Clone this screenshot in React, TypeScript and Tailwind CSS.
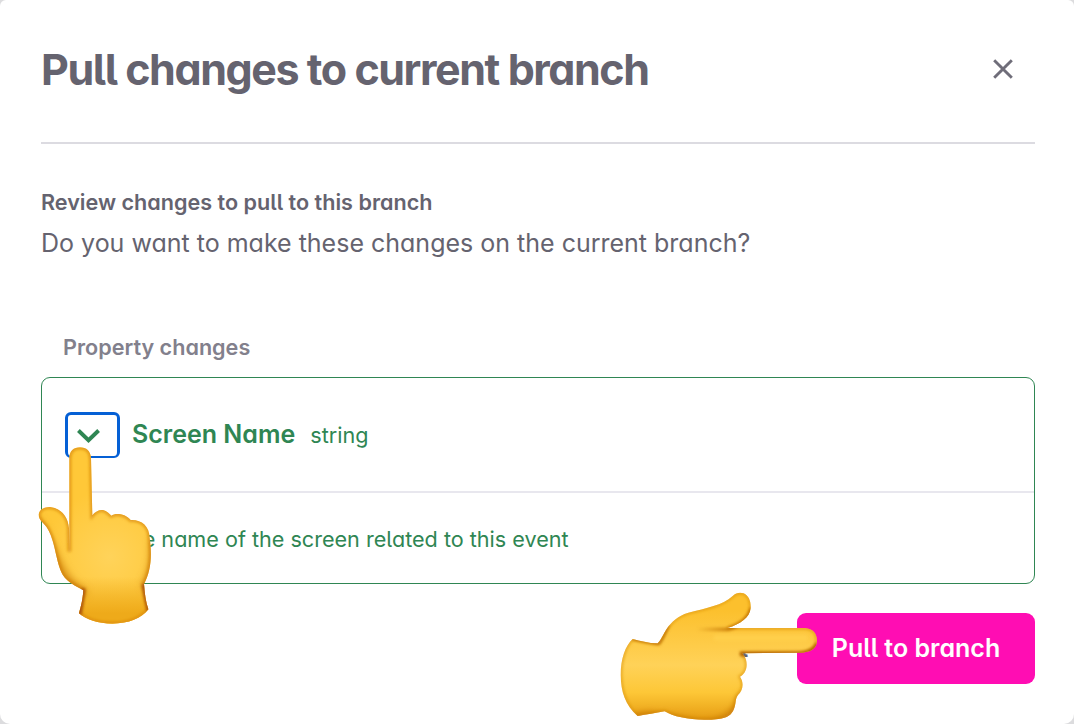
import React from "react";

const inter = "font-['Inter',sans-serif] [font-feature-settings:'cv11','cv05']";

function HandUp() {
  return (
    <svg className="absolute left-[36px] top-[444px] h-[184px] w-[120px]" viewBox="108 132 360 552">
      <defs>
        <path
          id="up"
          d="M208 455V174C208 154 221 142 240 142S272 154 273 174L277 346C285 336 295 330 305 330C317 330 325 338 334 347C345 339 375 340 392 360C422 358 449 376 449 415C457 470 452 515 432 552C434 580 437 605 445 628C425 655 385 671 337 671C295 671 258 658 237 640C244 615 248 600 250 571C225 555 205 550 188 524C168 490 166 420 140 382C130 367 116 362 116 343C118 328 132 321 150 321C184 325 204 350 207 385Z"
        />
        <clipPath id="upClip"><use href="#up" /></clipPath>
        <filter id="b14" x="-40%" y="-40%" width="180%" height="180%"><feGaussianBlur stdDeviation="12" /></filter>
        <filter id="b5" x="-40%" y="-40%" width="180%" height="180%"><feGaussianBlur stdDeviation="5" /></filter>
        <radialGradient id="upFill" gradientUnits="userSpaceOnUse" cx="330" cy="470" r="200">
          <stop offset="0" stopColor="#ffd35a" />
          <stop offset="1" stopColor="#ffc838" />
        </radialGradient>
        <linearGradient id="upWrist" gradientUnits="userSpaceOnUse" x1="0" y1="530" x2="0" y2="640">
          <stop offset="0" stopColor="#eeaa1a" stopOpacity="0" />
          <stop offset="1" stopColor="#eeaa1a" />
        </linearGradient>
      </defs>
      <use href="#up" fill="url(#upFill)" />
      <g clipPath="url(#upClip)">
        <path d="M200 520H480V700H200Z" fill="url(#upWrist)" />
        <use href="#up" fill="none" stroke="#d98a0e" strokeOpacity=".8" strokeWidth="11" filter="url(#b5)" />
        <path d="M105 360C160 420 165 540 255 580M462 420C466 480 455 530 434 560" fill="none" stroke="#c26f08" strokeWidth="16" filter="url(#b14)" />
        <path d="M250 565L238 645M431 552L448 635" fill="none" stroke="#a94f08" strokeWidth="13" filter="url(#b5)" />
        <path d="M209 370V458" fill="none" stroke="#c57908" strokeWidth="9" filter="url(#b5)" />
      </g>
    </svg>
  );
}

function HandRight() {
  return (
    <svg className="absolute left-[618px] top-[590px] h-[132px] w-[202px]" viewBox="54 30 606 396">
      <defs>
        <path
          id="rt"
          d="M98 177C120 182 145 190 173 190C193 170 200 118 265 98C320 84 367 76 398 48C408 38 420 37 431 40C447 47 453 65 452 84C449 113 422 132 382 144H615C638 146 651 160 651 182C650 206 631 217 600 218L427 220C434 229 440 238 440 254C440 273 430 284 420 290C432 307 430 330 414 345C405 356 409 370 402 386C395 405 382 413 355 417C290 425 225 413 194 394C165 399 140 404 113 408C75 375 63 335 62 285C62 237 76 197 98 177Z"
        />
        <clipPath id="rtClip"><use href="#rt" /></clipPath>
        <filter id="c14" x="-40%" y="-40%" width="180%" height="180%"><feGaussianBlur stdDeviation="10" /></filter>
        <filter id="c5" filterUnits="userSpaceOnUse" x="0" y="0" width="720" height="480"><feGaussianBlur stdDeviation="5" /></filter>
        <linearGradient id="rtFill" gradientUnits="userSpaceOnUse" x1="0" y1="90" x2="0" y2="420">
          <stop offset="0" stopColor="#fcc02d" />
          <stop offset=".5" stopColor="#ffd258" />
          <stop offset=".75" stopColor="#fdc737" />
          <stop offset="1" stopColor="#e69c12" />
        </linearGradient>
        <linearGradient id="rtCrease" gradientUnits="userSpaceOnUse" x1="290" y1="0" x2="400" y2="0">
          <stop offset="0" stopColor="#c07005" stopOpacity="0" />
          <stop offset="1" stopColor="#c07005" />
        </linearGradient>
      </defs>
      <use href="#rt" fill="url(#rtFill)" />
      <g clipPath="url(#rtClip)">
        <use href="#rt" fill="none" stroke="#dc930f" strokeOpacity=".7" strokeWidth="9" filter="url(#c5)" />
        <path d="M98 414C160 389 220 422 300 429C380 429 410 395 424 345" fill="none" stroke="#c87808" strokeWidth="16" filter="url(#c14)" />
        <path d="M98 176L176 191C188 178 192 160 205 136" fill="none" stroke="#bd6f07" strokeWidth="8" filter="url(#c5)" />
        <path d="M420 222H600Q642 218 654 190" fill="none" stroke="#b06004" strokeWidth="14" filter="url(#c5)" />
        <path d="M290 148H382C420 138 448 115 454 84" fill="none" stroke="url(#rtCrease)" strokeWidth="10" filter="url(#c5)" />
        <path d="M350 174H615" stroke="#ffcf4c" strokeWidth="18" strokeLinecap="round" filter="url(#c5)" />
      </g>
    </svg>
  );
}

export default function App() {
  return (
    <div className={`relative h-[724px] w-[1074px] overflow-hidden bg-[#dcdcde] text-[#65636f] ${inter}`}>
      <main className="flex h-full flex-col rounded-t-[6px] rounded-b-[10px] bg-white pr-[39px] pl-[41px]">
        <header className="flex h-[144px] shrink-0 items-start justify-between border-b-2 border-[#dcdbe1] pt-[42px]">
          <h1 className="text-[43px] leading-[54px] font-bold tracking-[-1.43px] whitespace-nowrap">Pull changes to current branch</h1>
          <button aria-label="Close" className="mt-[17px] mr-[22px]">
            <svg className="h-5 w-5" viewBox="0 0 20 20" fill="none" stroke="#6f6d79" strokeWidth="2.9">
              <path d="M1.2 1.2L18.8 18.8M18.8 1.2L1.2 18.8" />
            </svg>
          </button>
        </header>
        <section className="mt-[44px] h-[144px] shrink-0 whitespace-nowrap">
          <h2 className="text-[21.6px] leading-[28px] font-semibold">Review changes to pull to this branch</h2>
          <p className="mt-[10px] text-[25px] leading-[34px]">Do you want to make these changes on the current branch?</p>
        </section>
        <h3 className="ml-[22px] h-[45px] shrink-0 text-[21.6px] leading-[30px] font-semibold text-[#82808c]">Property changes</h3>
        <section className="flex h-[207px] shrink-0 flex-col rounded-[9px] border border-[#2f8653] text-[#2f8653]">
          <div className="flex h-[115px] items-start border-b-2 border-[#e8e7ee] pt-[34px] pl-[23px]">
            <button className="flex h-[46px] w-[55px] items-center justify-center rounded-[6px] border-[3px] border-b-2 border-[#0560d5]">
              <svg className="-ml-2 h-[14px] w-[23px]" viewBox="0 0 23 14" fill="none" stroke="#2f8653" strokeWidth="3.9">
                <path d="M1.4 1.5L11.5 11.2L21.6 1.5" />
              </svg>
            </button>
            <div className="flex items-baseline pt-[5px] pl-[12px] whitespace-nowrap">
              <span className="text-[25px] leading-[34px] font-semibold">Screen Name</span>
              <span className="ml-[15px] text-[21.6px]">string</span>
            </div>
          </div>
          <p className="pt-[31px] pl-[74px] text-[21.6px] leading-[30px] whitespace-nowrap">The name of the screen related to this event</p>
        </section>
        <footer className="mt-[29px] flex items-center justify-end text-[25px] font-semibold whitespace-nowrap">
          <button className="mr-[49px] h-[71px]">Cancel</button>
          <button className="h-[71px] w-[238px] rounded-[9px] bg-[#ff0db3] text-white">Pull to branch</button>
        </footer>
      </main>
      <HandUp />
      <HandRight />
    </div>
  );
}
